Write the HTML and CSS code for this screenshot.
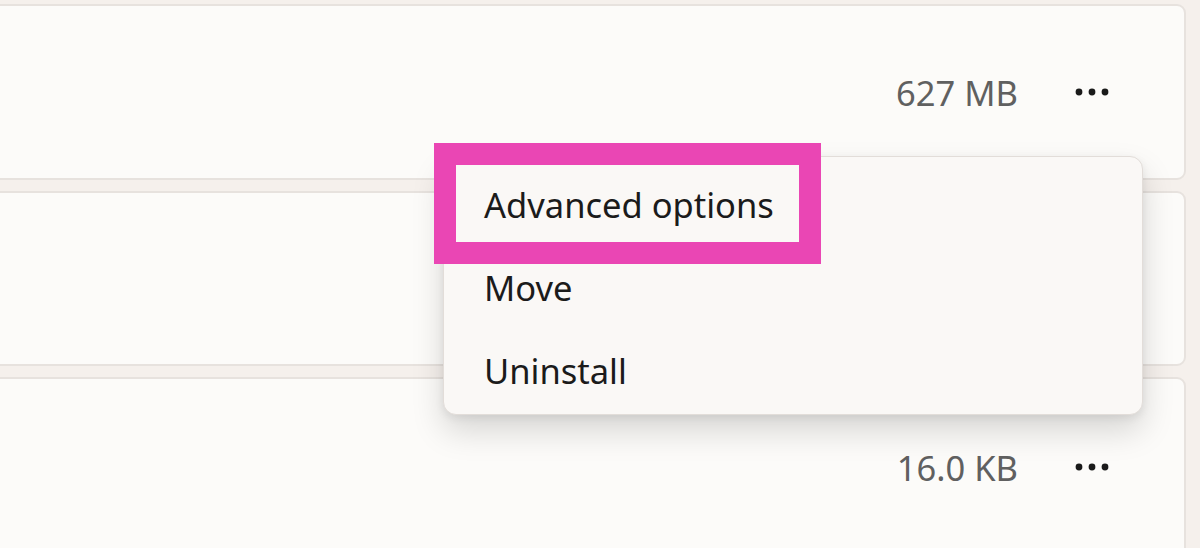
FILE: index.html
```html
<!DOCTYPE html>
<html lang="en">
<head>
<meta charset="utf-8">
<title>Installed apps</title>
<link rel="stylesheet" href="styles.css">
</head>
<body>
<div class="page">
  <div class="list">
    <div class="card card-1">
      <span class="size">627 MB</span>
      <button class="more" aria-label="More options">
        <svg width="34" height="8" viewBox="0 0 34 8"><circle cx="4" cy="4" r="3.4"/><circle cx="17" cy="4" r="3.4"/><circle cx="30" cy="4" r="3.4"/></svg>
      </button>
    </div>
    <div class="card card-2"></div>
    <div class="card card-3">
      <span class="size">16.0 KB</span>
      <button class="more" aria-label="More options">
        <svg width="34" height="8" viewBox="0 0 34 8"><circle cx="4" cy="4" r="3.4"/><circle cx="17" cy="4" r="3.4"/><circle cx="30" cy="4" r="3.4"/></svg>
      </button>
    </div>
  </div>
  <div class="menu">
    <div class="item">Advanced options</div>
    <div class="item">Move</div>
    <div class="item">Uninstall</div>
    <div class="highlight"></div>
  </div>
</div>
</body>
</html>
```

FILE: styles.css
```css
* { box-sizing: border-box; }
html, body {
  margin: 0;
  padding: 0;
  width: 1200px;
  height: 548px;
  overflow: hidden;
  background: #f5f0ec;
  font-family: "Noto Sans", "Open Sans", sans-serif;
}
.page {
  position: relative;
  width: 1200px;
  height: 548px;
}
.list {
  display: flex;
  flex-direction: column;
  gap: 11px;
  padding-top: 4px;
  margin-left: -20px;
  width: 1206px;
}
.card {
  display: flex;
  align-items: center;
  justify-content: flex-end;
  background: #fcfbf9;
  border: 2px solid #e7e2de;
  border-radius: 9px;
  padding-right: 60px;
}
.card-1 { height: 176px; }
.card-2 { height: 175px; }
.card-3 { height: 180px; }
.size {
  font-size: 34.5px;
  color: #606060;
}
.more {
  width: 64px;
  height: 48px;
  margin-left: 42px;
  border: 0;
  background: transparent;
  padding: 0;
  display: flex;
  align-items: center;
  justify-content: center;
}
.more svg { fill: #1a1a1a; }
.menu {
  position: absolute;
  left: 443px;
  top: 156px;
  width: 700px;
  height: 259px;
  padding: 6px 0 4px;
  background: #faf8f6;
  border: 1px solid #e2ddd9;
  border-radius: 13px;
  box-shadow: 0 16px 32px rgba(0, 0, 0, 0.15), 0 3px 8px rgba(0, 0, 0, 0.07);
}
.item {
  height: 83px;
  display: flex;
  align-items: center;
  padding-left: 40px;
  font-size: 34.5px;
  color: #1b1b1b;
}
.highlight {
  position: absolute;
  left: -10px;
  top: -14px;
  width: 387px;
  height: 121px;
  border: 22px solid #ea46b4;
}
```
